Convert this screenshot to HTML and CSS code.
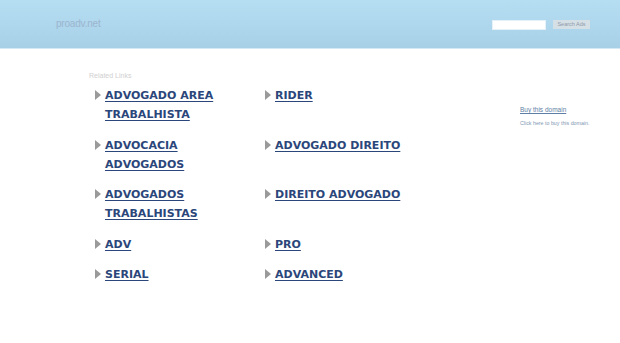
FILE: index.html
```html
<!DOCTYPE html>
<html>
<head>
<meta charset="utf-8">
<title>proadv.net</title>
<link rel="stylesheet" href="styles.css">
</head>
<body>
<header class="top">
  <div class="logo">proadv.net</div>
  <form class="search">
    <input class="search-input" type="text">
    <button class="search-btn" type="button">Search Ads</button>
  </form>
</header>
<main class="main">
  <section class="related">
    <div class="related-title">Related Links</div>
    <ul class="links">
      <li><span class="arrow"></span><a href="#">ADVOGADO AREA TRABALHISTA</a></li>
      <li><span class="arrow"></span><a href="#">RIDER</a></li>
      <li><span class="arrow"></span><a href="#">ADVOCACIA ADVOGADOS</a></li>
      <li><span class="arrow"></span><a href="#">ADVOGADO DIREITO</a></li>
      <li><span class="arrow"></span><a href="#">ADVOGADOS TRABALHISTAS</a></li>
      <li><span class="arrow"></span><a href="#">DIREITO ADVOGADO</a></li>
      <li><span class="arrow"></span><a href="#">ADV</a></li>
      <li><span class="arrow"></span><a href="#">PRO</a></li>
      <li><span class="arrow"></span><a href="#">SERIAL</a></li>
      <li><span class="arrow"></span><a href="#">ADVANCED</a></li>
    </ul>
  </section>
  <aside class="buy">
    <a class="buy-link" href="#">Buy this domain</a>
    <div class="buy-text">Click here to buy this domain.</div>
  </aside>
</main>
</body>
</html>
```
FILE: styles.css
```css
html, body {
  margin: 0;
  padding: 0;
  background: #ffffff;
  font-family: "Liberation Sans", Arial, sans-serif;
}

.top {
  height: 48px;
  border-bottom: 1px solid #d3eaf6;
  background: linear-gradient(to bottom, #b6def3 0%, #a7cfe6 100%);
  display: flex;
  align-items: center;
  justify-content: space-between;
  padding: 0 30px 0 56px;
}

.logo {
  font-size: 10px;
  color: #9cb5cf;
  letter-spacing: -0.2px;
  margin-top: -1px;
}

.search {
  display: flex;
  align-items: center;
  gap: 7px;
  margin: 1px 0 0 0;
}

.search-input {
  width: 52px;
  height: 8px;
  padding: 0;
  margin: 0;
  border: 1px solid #e4f1f8;
  background: #ffffff;
}

.search-btn {
  width: 37px;
  height: 9px;
  padding: 0;
  margin: 0;
  border: none;
  background: #d5dfe6;
  color: #8d9aaa;
  font-family: "Liberation Sans", Arial, sans-serif;
  font-size: 5.5px;
  line-height: 9px;
}

.main {
  display: flex;
  padding: 22px 0 0 89px;
}

.related {
  width: 420px;
}

.related-title {
  font-size: 7px;
  line-height: 9px;
  color: #d0d0d0;
}

.links {
  list-style: none;
  margin: 6px 0 0 6px;
  padding: 0;
  display: grid;
  grid-template-columns: 150px 150px;
  column-gap: 20px;
  row-gap: 11.5px;
  align-items: start;
}

.links li {
  display: flex;
  align-items: flex-start;
  gap: 4px;
  font-family: "DejaVu Sans", Verdana, sans-serif;
  font-weight: bold;
  font-size: 11px;
  line-height: 19px;
}

.arrow {
  flex: none;
  width: 0;
  height: 0;
  margin-top: 4px;
  border-top: 5px solid transparent;
  border-bottom: 5px solid transparent;
  border-left: 6px solid #9a9a9a;
}

.links a {
  color: #2b467a;
  text-decoration: underline;
  text-decoration-thickness: 1px;
  text-underline-offset: 2px;
}

.buy {
  padding: 34px 0 0 11px;
  display: flex;
  flex-direction: column;
  gap: 5px;
}

.buy-link {
  font-size: 6.5px;
  line-height: 9px;
  color: #5f7fa6;
  text-decoration: underline;
}

.buy-text {
  font-size: 5.3px;
  line-height: 9px;
  color: #7f97b3;
}
```
